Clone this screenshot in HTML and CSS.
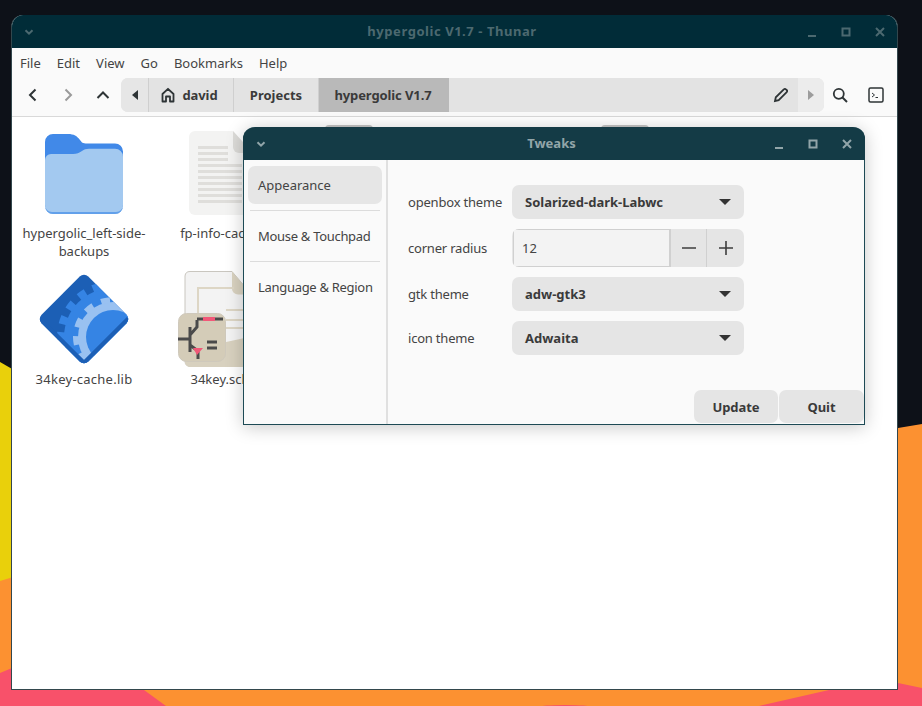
FILE: index.html
```html
<!DOCTYPE html>
<html lang="en">
<head>
<meta charset="utf-8">
<title>Desktop</title>
<link rel="stylesheet" href="styles.css">
</head>
<body>
<svg class="wallpaper" viewBox="0 0 922 706" width="922" height="706" aria-hidden="true">
  <path fill="#e9d00b" d="M0 362 L40 385 V600 H0Z"/>
  <path fill="#fc9131" d="M0 581 Q400 455 898 428 L922 424 V706 H0Z"/>
  <path fill="#f8516a" d="M0 673 L12 668 L120 660 L144 690 L166 706 H0Z"/>
  <path fill="#f8516a" d="M759 706 L829 690 L860 672 L898 683 L922 688 V706Z"/>
  <ellipse fill="#f8516a" cx="565" cy="707" rx="26" ry="2"/>
</svg>

<section class="window thunar">
  <header class="titlebar thunar-title">
    <svg class="wm-icon menu-chev" viewBox="0 0 12 12"><path d="M2.5 4.2 6 7.7 9.5 4.2" fill="none" stroke="currentColor" stroke-width="2"/></svg>
    <span class="title">hypergolic V1.7 - Thunar</span>
    <div class="wm-buttons">
      <svg class="wm-icon" viewBox="0 0 12 12"><path d="M2 10h8" stroke="currentColor" stroke-width="2"/></svg>
      <svg class="wm-icon" viewBox="0 0 12 12"><rect x="2.5" y="2.5" width="7" height="7" fill="none" stroke="currentColor" stroke-width="2"/></svg>
      <svg class="wm-icon" viewBox="0 0 12 12"><path d="M2 2l8 8M10 2l-8 8" stroke="currentColor" stroke-width="2"/></svg>
    </div>
  </header>
  <nav class="menubar">
    <span>File</span><span>Edit</span><span>View</span><span>Go</span><span>Bookmarks</span><span>Help</span>
  </nav>
  <div class="toolbar">
    <div class="nav-buttons">
      <svg class="tool-icon" viewBox="0 0 16 16"><path d="M10.5 2.5 5 8l5.5 5.5" fill="none" stroke="#2e3436" stroke-width="2"/></svg>
      <svg class="tool-icon" viewBox="0 0 16 16"><path d="M5.5 2.5 11 8l-5.5 5.5" fill="none" stroke="#9a9a9a" stroke-width="2"/></svg>
      <svg class="tool-icon" viewBox="0 0 16 16"><path d="M2.5 11 8 5.500l5.500 5.500" fill="none" stroke="#2e3436" stroke-width="2"/></svg>
    </div>
    <div class="pathbar">
      <span class="path-arrow left"><svg viewBox="0 0 8 12" width="8" height="12"><path d="M7 1v10L1 6z" fill="#2e3436"/></svg></span>
      <span class="crumb crumb-home">
        <svg viewBox="0 0 16 16" width="16" height="16"><path d="M2.500 14.500V7L8 1.800 13.500 7v7.500H10V9.500H6v5z" fill="none" stroke="#2e3436" stroke-width="1.800" stroke-linejoin="round"/></svg>
        david
      </span>
      <span class="crumb crumb-projects">Projects</span>
      <span class="crumb crumb-active">hypergolic V1.7</span>
      <span class="path-fill">
        <svg viewBox="0 0 16 16" width="16" height="16"><path d="M2 14l.8-3.700 8-8a1.500 1.500 0 0 1 2.200 0l.7.700a1.500 1.500 0 0 1 0 2.200l-8 8z" fill="none" stroke="#2e3436" stroke-width="1.800"/></svg>
      </span>
      <span class="path-arrow right"><svg viewBox="0 0 8 12" width="8" height="12"><path d="M1 1v10l6-5z" fill="#9c9c9c"/></svg></span>
    </div>
    <svg class="tool-icon search" viewBox="0 0 16 16"><circle cx="6.800" cy="6.800" r="5" fill="none" stroke="#2e3436" stroke-width="1.800"/><path d="M10.500 10.500 15 15" stroke="#2e3436" stroke-width="2"/></svg>
    <svg class="tool-icon terminal" viewBox="0 0 16 16"><rect x="1" y="1" width="14" height="14" rx="1.500" fill="none" stroke="#2e3436" stroke-width="1.500"/><path d="M4 6l2.500 2L4 10M7.500 10.500H10" fill="none" stroke="#2e3436"/></svg>
  </div>
  <main class="icon-view">
    <span class="peek peek-a"></span>
    <span class="peek peek-b"></span>
    <figure class="file">
      <div class="file-icon">
        <svg class="folder" viewBox="0 0 78 80" width="78" height="80">
          <path d="M0 8a8 8 0 0 1 8-8h15c6 0 9 2 12 6l2 2.500c1.500 .8 3 1 5 1h28a8 8 0 0 1 8 8V60H0z" fill="#4189e8"/>
          <path d="M0 26a6 6 0 0 1 6-6h22c4 0 6-1 9-3 2-1.500 4-2.300 7-2.300h26a8 8 0 0 1 8 8V72a8 8 0 0 1-8 8H8a8 8 0 0 1-8-8z" fill="#a3c9f0"/>
          <path d="M0 71v1a8 8 0 0 0 8 8h62a8 8 0 0 0 8-8v-1a7 7 0 0 1-7 7H7a7 7 0 0 1-7-7z" fill="#62a0ea"/>
        </svg>
      </div>
      <figcaption>hypergolic_left-side-<br>backups</figcaption>
    </figure>
    <figure class="file">
      <div class="file-icon">
        <svg viewBox="0 0 62 84" width="62" height="84">
          <path d="M6 0h38l18 20v58a6 6 0 0 1-6 6H6a6 6 0 0 1-6-6V6a6 6 0 0 1 6-6z" fill="#f3f3f2"/>
          <path d="M44 0l18 20v2H50a6 6 0 0 1-6-6z" fill="#dcdbd8"/>
          <g fill="#dfdedb">
            <rect x="9" y="15" width="30" height="3"/><rect x="9" y="21" width="30" height="3"/><rect x="9" y="27" width="30" height="3"/>
            <rect x="9" y="33" width="44" height="3"/><rect x="9" y="39" width="44" height="3"/><rect x="9" y="45" width="44" height="3"/>
            <rect x="9" y="51" width="44" height="3"/><rect x="9" y="57" width="44" height="3"/><rect x="9" y="63" width="44" height="3"/><rect x="9" y="69" width="44" height="3"/>
          </g>
        </svg>
      </div>
      <figcaption>fp-info-cache</figcaption>
    </figure>
    <span class="cell-gap"></span>
    <span class="cell-gap"></span>
    <figure class="file">
      <div class="file-icon">
        <svg viewBox="0 0 90 90" width="90" height="90">
          <defs><clipPath id="diamond"><rect x="12" y="12" width="66" height="66" rx="6" transform="rotate(45 45 45)"/></clipPath></defs>
          <g clip-path="url(#diamond)">
            <rect width="90" height="90" fill="#1c5fb5"/>
            <circle cx="74" cy="63" r="49" fill="#3584e4"/>
            <circle cx="74" cy="63" r="52" fill="none" stroke="#3584e4" stroke-width="8" stroke-dasharray="8 8"/>
            <circle cx="74" cy="63" r="35" fill="#99c1f1"/>
            <circle cx="74" cy="63" r="37" fill="none" stroke="#99c1f1" stroke-width="6" stroke-dasharray="9 9"/>
            <circle cx="74" cy="63" r="27" fill="#3584e4"/>
            <path d="M0 45 45 90 90 45" fill="none" stroke="#1c5fb5" stroke-width="6"/>
          </g>
        </svg>
      </div>
      <figcaption class="caption-wide">34key-cache.lib</figcaption>
    </figure>
    <figure class="file file-sch">
      <div class="file-icon">
        <svg viewBox="0 0 84 96" width="84" height="96">
          <path d="M12 .5h42l17 20v70a5 5 0 0 1-5 5H12a5 5 0 0 1-5-5V5a5 5 0 0 1 5-4.500z" fill="#f3f3f3" stroke="#c9c6bf"/>
          <path d="M7 80 71 66v25a5 5 0 0 1-5 5H12a5 5 0 0 1-5-5z" fill="#d8d1bf"/>
          <path d="M54 .5l17 20v3H60a6 6 0 0 1-6-6z" fill="#d9d2c0"/>
          <path d="M20 45V17h36M48 39h24M48 49h24M48 57h24" fill="none" stroke="#ddd6c5" stroke-width="2"/>
          <rect x=".5" y="42.500" width="47" height="48" rx="8" fill="#d4ccb8" stroke="#cfc9bc"/>
          <g fill="none" stroke="#4a4a4a" stroke-width="3">
            <path d="M12 56v25M0 68h12M12 64l7-8v-7M19 48h26M12 74l8 6v8M29 71h10M29 77h10"/>
          </g>
          <rect x="25" y="46" width="12" height="4" fill="#f15878"/>
          <path d="M15 77h10l-6 7z" fill="#f15878"/>
        </svg>
      </div>
      <figcaption>34key.sch</figcaption>
    </figure>
  </main>
</section>

<section class="window tweaks">
  <header class="titlebar tweaks-title">
    <svg class="wm-icon menu-chev" viewBox="0 0 12 12"><path d="M2.500 4.200 6 7.700 9.500 4.200" fill="none" stroke="currentColor" stroke-width="2"/></svg>
    <span class="title">Tweaks</span>
    <div class="wm-buttons">
      <svg class="wm-icon" viewBox="0 0 12 12"><path d="M2 10h8" stroke="currentColor" stroke-width="2"/></svg>
      <svg class="wm-icon" viewBox="0 0 12 12"><rect x="2.500" y="2.500" width="7" height="7" fill="none" stroke="currentColor" stroke-width="2"/></svg>
      <svg class="wm-icon" viewBox="0 0 12 12"><path d="M2 2l8 8M10 2l-8 8" stroke="currentColor" stroke-width="2"/></svg>
    </div>
  </header>
  <div class="tweaks-body">
    <aside class="sidebar">
      <div class="side-item selected">Appearance</div>
      <hr class="side-sep">
      <div class="side-item">Mouse &amp; Touchpad</div>
      <hr class="side-sep">
      <div class="side-item">Language &amp; Region</div>
    </aside>
    <div class="panel">
      <div class="form">
        <label>openbox theme</label>
        <div class="combo"><span>Solarized-dark-Labwc</span><i class="caret"></i></div>
        <label>corner radius</label>
        <div class="spin">
          <span class="spin-input">12</span>
          <span class="spin-btn"><svg viewBox="0 0 16 16" width="16" height="16"><path d="M1 8h14" stroke="#3d3d3d" stroke-width="1.600"/></svg></span>
          <span class="spin-btn plus"><svg viewBox="0 0 16 16" width="16" height="16"><path d="M1 8h14M8 1v14" stroke="#3d3d3d" stroke-width="1.600"/></svg></span>
        </div>
        <label>gtk theme</label>
        <div class="combo"><span>adw-gtk3</span><i class="caret"></i></div>
        <label>icon theme</label>
        <div class="combo"><span>Adwaita</span><i class="caret"></i></div>
      </div>
      <div class="actions">
        <button type="button">Update</button>
        <button type="button">Quit</button>
      </div>
    </div>
  </div>
</section>
</body>
</html>
```
FILE: styles.css
```css
* { box-sizing: border-box; }
html, body { margin: 0; height: 706px; overflow: hidden; }
body {
  position: relative;
  background: #0d1118;
  font-family: "Noto Sans", "Open Sans", sans-serif;
  font-size: 13px;
  color: #444;
}
.wallpaper { position: absolute; inset: 0; display: block; }

.window { position: absolute; display: flex; flex-direction: column; }
.thunar {
  left: 11px; top: 15px; width: 887px; height: 675px;
  background: #fff;
  border-radius: 12px 12px 0 0;
  border: 1px solid #33474d;
  border-top: 0;
  overflow: hidden;
}
.tweaks {
  left: 243px; top: 127px; width: 622px; height: 298px;
  background: #fafafa;
  border-radius: 12px 12px 0 0;
  border: 1px solid #1d4a55;
  border-top: 0;
  box-shadow: 0 2px 18px rgba(0,0,0,.22);
}

.titlebar {
  flex: none;
  height: 33px;
  display: grid;
  grid-template-columns: 1fr auto 1fr;
  align-items: center;
  font-weight: 700;
  padding: 0 12px;
  margin: 0 -1px;
}
.title { text-align: center; margin-right: 5px; padding-bottom: 2px; }
.thunar-title { background: #012c38; color: #4c6970; }
.thunar-title .title { letter-spacing: .55px; }
.tweaks-title { background: #143b46; color: #92a5a9; border-radius: 12px 12px 0 0; }
.wm-buttons { display: flex; justify-content: flex-end; gap: 22px; }
.wm-icon { width: 12px; height: 12px; display: block; }

.menubar {
  flex: none;
  height: 30px;
  background: #fafafa;
  display: flex;
  align-items: center;
  gap: 16px;
  padding-left: 8px;
  color: #444;
}
.toolbar {
  flex: none;
  height: 39px;
  background: #fafafa;
  border-bottom: 1px solid #d9d9d9;
  padding-bottom: 4px;
  display: flex;
  align-items: center;
}
.nav-buttons { display: flex; gap: 19px; padding-left: 13px; width: 109px; }
.tool-icon { width: 16px; height: 16px; flex: none; }
.pathbar {
  height: 34px;
  width: 703px;
  display: flex;
  font-weight: 700;
  color: #3a3a3a;
  border-radius: 7px;
  overflow: hidden;
  background: #e3e3e3;
}
.crumb { display: flex; align-items: center; justify-content: center; gap: 6px; border-right: 1px solid #cfcfcf; }
.path-arrow { display: flex; align-items: center; justify-content: center; flex: none; }
.path-arrow.left { width: 28px; background: #e6e6e6; border-right: 1px solid #cfcfcf; }
.path-arrow.right { width: 26px; background: #ececec; }
.crumb-home { width: 85px; padding-right: 4px; letter-spacing: -.1px; }
.crumb-projects { width: 85px; }
.crumb-active { width: 130px; background: #b9b9b9; border-right: 0; letter-spacing: -.1px; padding-right: 2px; }
.path-fill { flex: 1; display: flex; align-items: center; justify-content: flex-end; padding-right: 9px; }
.search { margin-left: 8px; }
.terminal { margin-left: 20px; }

.icon-view {
  position: relative;
  flex: 1;
  background: #fff;
  padding: 8px 0 0 4px;
  display: grid;
  grid-template-columns: repeat(4, 136px);
  grid-auto-rows: 146px;
  align-content: start;
}
.file { margin: 0; display: flex; flex-direction: column; align-items: center; }
.file-icon { height: 96px; display: flex; align-items: center; justify-content: center; }
.folder { margin-top: 2px; }
.file figcaption { margin-top: 3px; line-height: 18px; text-align: center; color: #444; }
.file figcaption.caption-wide { letter-spacing: .25px; }
.cell-gap { display: block; }
.peek {
  position: absolute; top: 8px; width: 48px; height: 6px;
  background: #c4c4c4; border-radius: 4px 4px 0 0;
}
.peek-a { left: 313px; }
.peek-b { left: 589px; }

.tweaks-body { flex: 1; display: flex; min-height: 0; }
.sidebar {
  flex: none; width: 144px;
  border-right: 2px solid #e0e0e0;
  padding: 6px 4px 0 4px;
  background: #fafafa;
}
.side-item {
  height: 38px; display: flex; align-items: center; padding-left: 10px; border-radius: 7px; color: #444; letter-spacing: -.3px;
}
.side-item.selected { background: #e6e6e6; letter-spacing: 0; }
.side-sep { border: 0; border-top: 1px solid #dcdcdc; margin: 6px 2px; height: 0; }
.panel { flex: 1; display: flex; flex-direction: column; padding: 25px 0 1px 20px; }
.form {
  display: grid;
  grid-template-columns: 104px 232px;
  row-gap: 10px;
  align-items: center;
}
.form label { letter-spacing: -.2px; }
.combo {
  height: 34px;
  background: #e5e5e5;
  border-radius: 7px;
  display: flex; align-items: center; justify-content: space-between;
  padding: 0 13px;
  font-weight: 700;
  color: #3a3a3a;
}
.caret { width: 0; height: 0; border: 6px solid transparent; border-top: 6px solid #333; border-bottom: 0; }
.spin {
  height: 38px; background: #e5e5e5; border-radius: 7px; display: flex; overflow: hidden;
}
.spin-input {
  width: 158px; margin-left: 1px; background: #f3f3f3; border: 1px solid #d0d0d0; border-right-width: 2px;
  display: flex; align-items: center; padding-left: 8px; color: #444;
}
.spin-btn { width: 35px; display: flex; align-items: center; justify-content: center; }
.spin-btn.plus { width: 38px; border-left: 1px solid #d0d0d0; }
.actions { margin-top: auto; align-self: flex-end; display: flex; gap: 1px; }
.actions button {
  width: 84px; height: 33px; border: 0; border-radius: 7px; background: #e5e5e5;
  font: 700 13px "Noto Sans", "Open Sans", sans-serif; color: #3a3a3a; padding: 0; letter-spacing: -.05px;
}
.actions button:last-child { width: 85px; }
```
